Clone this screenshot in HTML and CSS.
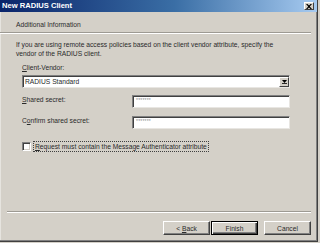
FILE: index.html
```html
<!DOCTYPE html>
<html>
<head>
<meta charset="utf-8">
<link rel="stylesheet" href="styles.css">
</head>
<body>
<div class="window">
  <div class="titlebar">
    <span class="title">New RADIUS Client</span>
    <span class="close"><svg width="6" height="5" viewBox="0 0 6 5"><path d="M0 0h1.5l1.5 1.6L4.5 0H6L3.8 2.5 6 5H4.5L3 3.4 1.5 5H0l2.2-2.5z" fill="#000"/></svg></span>
  </div>
  <div class="header">Additional Information</div>
  <div class="sep top-sep"></div>
  <div class="content">
    <p class="intro">If you are using remote access policies based on the client vendor attribute, specify the vendor of the RADIUS client.</p>
    <div class="label"><u>C</u>lient-Vendor:</div>
    <div class="combo">
      <span class="combo-text">RADIUS Standard</span>
      <span class="combo-btn"><svg width="5" height="4" viewBox="0 0 5 4"><path d="M0 0h5L2.5 3z" fill="#000"/><rect x="0" y="3.2" width="5" height="0.8" fill="#000"/></svg></span>
    </div>
    <div class="row first-row">
      <div class="row-label"><u>S</u>hared secret:</div>
      <div class="field">*******</div>
    </div>
    <div class="row">
      <div class="row-label">C<u>o</u>nfirm shared secret:</div>
      <div class="field">*******</div>
    </div>
    <div class="check-row">
      <span class="checkbox"></span>
      <span class="check-label"><u>R</u>equest must contain the Message Authenticator attribute</span>
    </div>
  </div>
  <div class="footer">
    <div class="sep bottom-sep"></div>
    <div class="buttons">
      <span class="btn">&lt;&nbsp;<u>B</u>ack</span>
      <span class="btn default">Finish</span>
      <span class="btn cancel">Cancel</span>
    </div>
  </div>
</div>
</body>
</html>
```

FILE: styles.css
```css
* { box-sizing: border-box; }
html, body { margin: 0; padding: 0; background: #d4d0c8; }
body {
  width: 320px;
  height: 243px;
  overflow: hidden;
  font-family: "Liberation Sans", Arial, sans-serif;
  font-size: 6.7px;
  color: #2a2a2a;
}
.window {
  width: 318px;
  height: 242px;
  background: #d4d0c8;
  border-right: 1px solid #404040;
  border-bottom: 1px solid #404040;
  box-shadow: inset -1px -1px 0 #808080, inset 1px 0 0 #e6e4df;
  display: flex;
  flex-direction: column;
}
.titlebar {
  height: 12px;
  background: linear-gradient(to right, #0a246a 0%, #3a6ea5 55%, #a6caf0 100%);
  display: flex;
  align-items: center;
  padding: 0 3px 0 2px;
  flex-shrink: 0;
}
.title {
  color: #fff;
  font-weight: bold;
  font-size: 7.6px;
  line-height: 12px;
}
.close {
  margin-left: auto;
  width: 10px;
  height: 8px;
  background: #d4d0c8;
  border-top: 1px solid #fff;
  border-left: 1px solid #fff;
  border-right: 1px solid #404040;
  border-bottom: 1px solid #404040;
  display: flex;
  align-items: center;
  justify-content: center;
}
.close svg { display: block; }
.header {
  height: 20px;
  padding: 8px 16px 0;
  line-height: 9px;
  flex-shrink: 0;
}
.sep {
  height: 2px;
  border-top: 1px solid #9d9a93;
  border-bottom: 1px solid #fff;
}
.top-sep { width: 311px; }
.content {
  padding: 0 0 0 16px;
  display: flex;
  flex-direction: column;
}
.intro {
  margin: 6px 0 0;
  line-height: 9px;
  width: 266px;
}
.label {
  margin: 5px 0 0 6px;
  line-height: 9px;
}
.combo {
  margin: 3px 0 0 6px;
  width: 268px;
  height: 13px;
  background: #fff;
  border-top: 1px solid #808080;
  border-left: 1px solid #808080;
  border-bottom: 1px solid #e8e6e2;
  border-right: 1px solid #e8e6e2;
  box-shadow: inset 1px 1px 0 #404040;
  display: flex;
  align-items: center;
  padding-left: 2px;
}
.combo-text { line-height: 9px; flex: 1; }
.combo-btn {
  width: 10px;
  height: 10px;
  background: #d4d0c8;
  border-top: 1px solid #fff;
  border-left: 1px solid #fff;
  border-right: 1px solid #404040;
  border-bottom: 1px solid #404040;
  display: flex;
  align-items: center;
  justify-content: center;
}
.combo-btn svg { display: block; }
.row {
  display: flex;
  align-items: flex-start;
  margin: 8px 0 0 6px;
}
.first-row { margin-top: 7px; }
.row-label {
  width: 110px;
  line-height: 9px;
}
.field {
  width: 158px;
  height: 13px;
  background: #fff;
  border-top: 1px solid #808080;
  border-left: 1px solid #808080;
  border-bottom: 1px solid #e8e6e2;
  border-right: 1px solid #e8e6e2;
  box-shadow: inset 1px 1px 0 #404040;
  color: #8a8a8a;
  font-size: 5px;
  line-height: 9px;
  padding-left: 3px;
  letter-spacing: 0.2px;
}
.check-row {
  display: flex;
  align-items: center;
  margin: 12px 0 0 6px;
}
.checkbox {
  width: 9px;
  height: 9px;
  background: #fff;
  border-top: 1px solid #808080;
  border-left: 1px solid #808080;
  border-bottom: 1px solid #fff;
  border-right: 1px solid #fff;
  box-shadow: inset 1px 1px 0 #404040, inset -1px -1px 0 #d4d0c8;
  flex-shrink: 0;
}
.check-label {
  margin-left: 2px;
  padding: 0 1px;
  line-height: 9px;
  border: 1px dotted #404040;
}
.footer {
  margin-top: auto;
  padding-bottom: 6px;
}
.bottom-sep {
  margin-left: 7px;
  width: 304px;
}
.buttons {
  display: flex;
  justify-content: flex-end;
  margin-top: 8px;
  padding-right: 6px;
}
.btn {
  width: 47px;
  height: 14px;
  background: #d4d0c8;
  border-top: 1px solid #fff;
  border-left: 1px solid #fff;
  border-right: 1px solid #404040;
  border-bottom: 1px solid #404040;
  box-shadow: inset -1px -1px 0 #808080;
  display: flex;
  align-items: center;
  justify-content: center;
  line-height: 9px;
}
.btn.default {
  margin-left: 1px;
  border: 1px solid #000;
  box-shadow: inset 1px 1px 0 #fff, inset -1px -1px 0 #404040, inset -2px -2px 0 #808080;
}
.btn.cancel { margin-left: 6px; }
```
